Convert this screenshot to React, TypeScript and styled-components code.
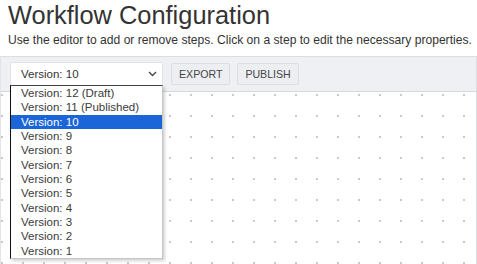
import React from "react";
import styled, { createGlobalStyle } from "styled-components";

const Global = createGlobalStyle`
  html, body { margin: 0; padding: 0; background: #ffffff; }
  body { font-family: "Liberation Sans", Arial, sans-serif; color: #333; }
  #root { width: 477px; height: 264px; overflow: hidden; }
`;

const Page = styled.div`
  width: 477px;
  height: 264px;
  display: flex;
  flex-direction: column;
  overflow: hidden;
`;

const Header = styled.header`
  padding: 0 8px;
`;

const Title = styled.h1`
  margin: 0;
  font-size: 25.4px;
  line-height: 30px;
  font-weight: 400;
  color: #333;
  white-space: nowrap;
`;

const Subtitle = styled.p`
  margin: 3px 0 0;
  font-size: 12.1px;
  line-height: 14px;
  color: #333;
  white-space: nowrap;
`;

const Editor = styled.section`
  margin-top: 9px;
  flex: 1;
  display: flex;
  flex-direction: column;
  border-left: 1px solid #e3e4e8;
  border-right: 1px solid #dcdde1;
  position: relative;
`;

const Toolbar = styled.div`
  height: 34px;
  display: flex;
  align-items: center;
  padding: 0 9px;
  background: #eff0f4;
  border-top: 1px solid #dcdde1;
  border-bottom: 1px solid #d6d7db;
  gap: 7px;
`;

const SelectWrap = styled.div`
  position: relative;
  margin-right: 1px;
`;

const SelectBox = styled.div`
  width: 153px;
  height: 24px;
  box-sizing: border-box;
  background: #fff;
  border: 1px solid #e1e2e6;
  border-radius: 2px;
  display: flex;
  align-items: center;
  justify-content: space-between;
  padding: 0 5px 0 10px;
  font-size: 11.5px;
  color: #333;
`;

const Button = styled.button`
  height: 22px;
  padding: 0 7px;
  background: #eceef2;
  border: 1px solid #dcdde1;
  border-radius: 2px;
  font-family: "Liberation Sans", Arial, sans-serif;
  font-size: 10.6px;
  color: #444;
  letter-spacing: 0;
`;

const Dropdown = styled.ul`
  position: absolute;
  left: 0;
  top: 23px;
  width: 153px;
  box-sizing: border-box;
  margin: 0;
  padding: 0;
  list-style: none;
  background: #fff;
  border-left: 1px solid #111;
  border-top: 1px solid #444;
  border-right: 1px solid #c4c4c4;
  border-bottom: 1px solid #c4c4c4;
  box-shadow: 2px 2px 3px rgba(0, 0, 0, 0.18);
  z-index: 5;
`;

const Option = styled.li<{ $active?: boolean }>`
  height: 14.33px;
  line-height: 14.33px;
  padding-left: 10px;
  font-size: 11.5px;
  white-space: nowrap;
  color: ${(p) => (p.$active ? "#fff" : "#3a3a3a")};
  background: ${(p) => (p.$active ? "#1a65d7" : "transparent")};
`;

const Canvas = styled.div`
  flex: 1;
  background-color: #fff;
  background-image: radial-gradient(circle at 1px 1px, #c9c9c9 1px, transparent 1.4px);
  background-size: 21px 21px;
  background-position: 0px 2px;
`;

const versions = [
  "Version: 12 (Draft)",
  "Version: 11 (Published)",
  "Version: 10",
  "Version: 9",
  "Version: 8",
  "Version: 7",
  "Version: 6",
  "Version: 5",
  "Version: 4",
  "Version: 3",
  "Version: 2",
  "Version: 1",
];

const Chevron = () => (
  <svg width="9" height="6" viewBox="0 0 9 6">
    <polyline points="1,1 4.5,4.5 8,1" fill="none" stroke="#444" strokeWidth="1.3" />
  </svg>
);

export default function App() {
  return (
    <Page>
      <Global />
      <Header>
        <Title>Workflow Configuration</Title>
        <Subtitle>
          Use the editor to add or remove steps. Click on a step to edit the necessary properties.
        </Subtitle>
      </Header>
      <Editor>
        <Toolbar>
          <SelectWrap>
            <SelectBox>
              <span>Version: 10</span>
              <Chevron />
            </SelectBox>
            <Dropdown>
              {versions.map((v) => (
                <Option key={v} $active={v === "Version: 10"}>
                  {v}
                </Option>
              ))}
            </Dropdown>
          </SelectWrap>
          <Button>EXPORT</Button>
          <Button>PUBLISH</Button>
        </Toolbar>
        <Canvas />
      </Editor>
    </Page>
  );
}
